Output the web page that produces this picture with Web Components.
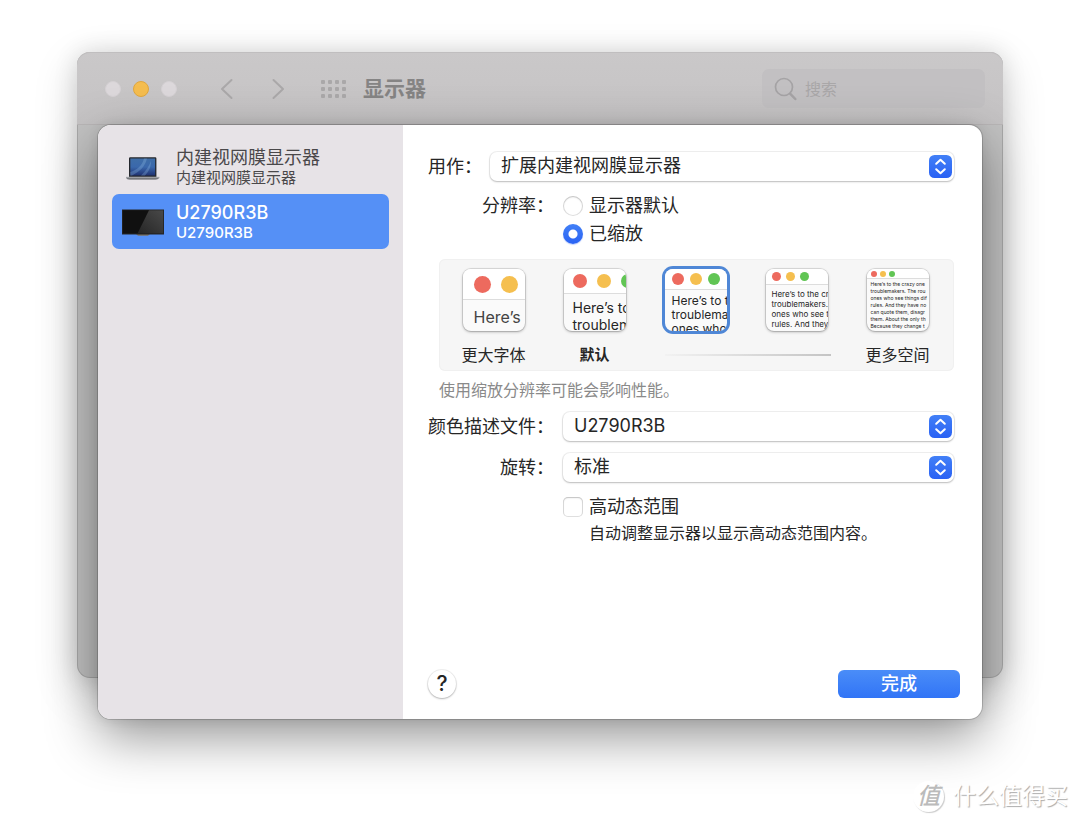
<!DOCTYPE html>
<html lang="zh-CN">
<head>
<meta charset="utf-8">
<meta name="viewport" content="width=device-width, initial-scale=1">
<title>显示器</title>
<style>
  html { background: #fff; }
  body { margin: 0; font: 18px/24px Inter, "Noto Sans CJK SC", sans-serif; color: #262626; }
</style>
</head>
<body>
<prefs-desktop>
  <prefs-window heading="显示器">
    <prefs-sheet>
      <display-item slot="sidebar" name="内建视网膜显示器" detail="内建视网膜显示器" kind="laptop"></display-item>
      <display-item slot="sidebar" name="U2790R3B" detail="U2790R3B" kind="monitor" selected></display-item>

      <popup-field label="用作：" value="扩展内建视网膜显示器" compact></popup-field>
      <resolution-field></resolution-field>
      <scale-picker></scale-picker>
      <popup-field label="颜色描述文件：" value="U2790R3B"></popup-field>
      <popup-field label="旋转：" value="标准"></popup-field>
      <check-field label="高动态范围" hint="自动调整显示器以显示高动态范围内容。"></check-field>

      <help-button slot="footer"></help-button>
      <push-button slot="footer">完成</push-button>
    </prefs-sheet>
  </prefs-window>
  <site-mark slot="mark"></site-mark>
</prefs-desktop>

<script>
class Base extends HTMLElement {
  connectedCallback() {
    if (this.shadowRoot) return;
    this.attachShadow({ mode: 'open' }).innerHTML =
      '<style>*{box-sizing:border-box}button,select,input{font:inherit;color:inherit;margin:0}</style>' + this.render();
  }
  attr(name) { return this.getAttribute(name) || ''; }
}

customElements.define('prefs-desktop', class extends Base {
  render() {
    return `<style>
      :host { display: block; position: relative; box-sizing: border-box; min-height: 100vh; padding: 52px 77px 102px; overflow: hidden; }
      ::slotted([slot=mark]) { position: absolute; right: 12px; bottom: 10px; }
    </style><slot></slot><slot name="mark"></slot>`;
  }
});

customElements.define('prefs-window', class extends Base {
  render() {
    return `<style>
      :host { display: flow-root; border-radius: 13px; background: #c2c2c2;
        box-shadow: inset 0 0 0 1px rgba(0,0,0,.13), 0 0 24px rgba(0,0,0,.12), 0 14px 44px rgba(0,0,0,.18); }
      main { padding: 0 21px; margin-bottom: -41px; }
    </style>
    <window-toolbar heading="${this.attr('heading')}"></window-toolbar>
    <main><slot></slot></main>`;
  }
});

customElements.define('window-toolbar', class extends Base {
  render() {
    const dots = [0, 7, 14].map(y => [0, 7, 14, 21].map(x =>
      `<rect x="${x}" y="${y}" width="4" height="4" rx="1"/>`).join('')).join('');
    return `<style>
      :host { display: flex; align-items: center; height: 73px; box-sizing: border-box; padding: 1px 18px 0 28px;
        border-radius: 13px 13px 0 0; border-bottom: 1px solid #b9b6b7;
        background: linear-gradient(#cac8c9, #c5c3c4); color: #858484;
        box-shadow: inset 0 1px 0 #c0bebf; }
      .lights { display: flex; gap: 12px; }
      .lights button { width: 16px; height: 16px; padding: 0; border: 1px solid #d5d1d4; border-radius: 50%; background: #dcd8db; }
      .lights .min { background: #f5bd4f; border-color: #e0a73e; }
      nav { display: flex; align-items: center; margin-left: 42px; }
      nav button { display: flex; padding: 0; border: 0; background: none; color: #aaa8a9; }
      svg { display: block; }
      .next { margin-left: 36px; }
      .grid { margin-left: 34px; }
      h1 { margin: 0 auto 0 16px; font-size: 21px; line-height: 28px; font-weight: 700; }
      .search { display: flex; align-items: center; gap: 8px; width: 223px; height: 39px; padding: 0 12px; border-radius: 7px; background: #c2c0c2; color: #a5a3a5; }
      input { flex: 1; min-width: 0; padding: 0; border: 0; outline: 0; background: none; font-size: 16px; line-height: 24px; }
      input::placeholder { color: #a9a7a8; opacity: 1; }
    </style>
    <div class="lights"><button aria-label="关闭"></button><button class="min" aria-label="最小化"></button><button aria-label="缩放"></button></div>
    <nav>
      <button aria-label="后退"><svg width="16" height="22" viewBox="0 0 16 22" fill="none" stroke="currentColor" stroke-width="2" stroke-linecap="round" stroke-linejoin="round"><path d="M12.500 2 3 11l9.500 9"/></svg></button>
      <button class="next" aria-label="前进"><svg width="16" height="22" viewBox="0 0 16 22" fill="none" stroke="currentColor" stroke-width="2" stroke-linecap="round" stroke-linejoin="round"><path d="M2.500 2 12 11l-9.500 9"/></svg></button>
      <button class="grid" aria-label="显示全部"><svg width="26" height="18" viewBox="0 0 26 18" fill="currentColor">${dots}</svg></button>
    </nav>
    <h1>${this.attr('heading')}</h1>
    <label class="search"><svg width="23" height="24" viewBox="0 0 23 24" fill="none" stroke="currentColor" stroke-linecap="round"><circle cx="10" cy="10" r="8.500" stroke-width="1.700"/><path d="M16.300 16.800 21.300 22" stroke-width="2.500"/></svg><input type="text" placeholder="搜索" aria-label="搜索"></label>`;
  }
});

customElements.define('prefs-sheet', class extends Base {
  render() {
    return `<style>
      :host { display: flex; position: relative; box-sizing: border-box; min-height: calc(100vh - 228px); border-radius: 13px; background: #fff;
        box-shadow: 0 0 0 1px rgba(0,0,0,.16), 0 0 12px rgba(0,0,0,.08), 0 18px 52px rgba(0,0,0,.42); }
      aside { flex: 0 0 305px; padding: 14px; border-radius: 13px 0 0 13px; background: #e7e3e7; }
      section { display: flex; flex-direction: column; flex: 1; min-width: 0; padding: 27px 22px 21px 25px; }
      form { display: flex; flex-direction: column; gap: 12px; margin: 0 6px auto 0; }
      footer { display: flex; align-items: center; justify-content: space-between; }
    </style>
    <aside><slot name="sidebar"></slot></aside>
    <section><form><slot></slot></form><footer><slot name="footer"></slot></footer></section>`;
  }
});

const deviceArt = {
  laptop: `<svg width="42" height="30" viewBox="0 0 42 30"><defs><linearGradient id="s" x1="0" y1="0" x2="0" y2="1"><stop offset="0" stop-color="#3f6ea8"/><stop offset=".5" stop-color="#3a68ac"/><stop offset="1" stop-color="#1f3272"/></linearGradient><linearGradient id="b" x1="0" y1="0" x2="0" y2="1"><stop offset="0" stop-color="#b9bbbf"/><stop offset="1" stop-color="#4b4d52"/></linearGradient></defs>
    <path d="M7 6.500a1.200 1.200 0 0 1 1.200-1.200h25a1.200 1.200 0 0 1 1.200 1.200V25H7z" fill="#24272d"/><path d="M8.300 6.500h24.800V23.500H8.300z" fill="url(#s)"/><path d="M8.300 20C15 18 20 14 22 6.500h3C23 15 17 20 10 23.500H8.300zM19 23.500C24 19 27 14 29 9c0 6-2 10-6 14.500z" fill="#92bce6" opacity=".3"/><path d="M4 24.800h33.400v1.200q-2 1.600-4 1.600H8q-3 0-4-1.600z" fill="url(#b)"/></svg>`,
  monitor: `<svg width="42" height="30" viewBox="0 0 42 30"><defs><linearGradient id="g" x1="0" y1="1" x2="1" y2="0"><stop offset="0" stop-color="#252525"/><stop offset="1" stop-color="#494949"/></linearGradient></defs>
    <path d="M14 27h14l-2 1.800h-10z" fill="#7a7060"/><path d="M0 2.500h42V27.500H0z" fill="#262626"/><path d="M.8 3.300h40.400V26.500H.8z" fill="#101010"/><path d="M27 3.300h14.200V26.500H15.500z" fill="url(#g)"/></svg>`
};

customElements.define('display-item', class extends Base {
  render() {
    return `<style>
      :host { display: block; color: #4a484a; }
      :host([selected]) { color: #fff; }
      button { display: flex; align-items: center; gap: 12px; width: 100%; padding: 8px 10px 7px; border: 0; border-radius: 7px; background: none; text-align: left; }
      :host([selected]) button { background: #5590f6; }
      svg { flex: none; }
      b, small { display: block; font-weight: 400; }
      b { font-size: 18px; line-height: 22px; }
      small { font-size: 15px; line-height: 18px; }
      :host([selected]) b, :host([selected]) small { font-weight: 500; }
    </style>
    <button aria-pressed="${this.hasAttribute('selected')}">${deviceArt[this.attr('kind')]}<span><b>${this.attr('name')}</b><small>${this.attr('detail')}</small></span></button>`;
  }
});

customElements.define('popup-field', class extends Base {
  render() {
    return `<style>
      :host { display: grid; grid-template-columns: 126px 1fr; gap: 9px; align-items: center; }
      :host([compact]) { grid-template-columns: 54px 1fr; gap: 8px; }
      label { text-align: right; white-space: nowrap; }
      .box { display: grid; align-items: center; }
      select, svg { grid-area: 1 / 1; }
      select { appearance: none; width: 100%; height: 29px; padding: 0 34px 2px 11px; border: 0; border-radius: 7px; background: #fff; line-height: 26px;
        box-shadow: 0 0 0 1px rgba(0,0,0,.06), 0 1px 2px rgba(0,0,0,.22); }
      svg { justify-self: end; margin-right: 2px; pointer-events: none; }
    </style>
    <label for="f">${this.attr('label')}</label>
    <div class="box"><select id="f"><option>${this.attr('value')}</option></select>
    <svg width="23" height="23" viewBox="0 0 23 23"><defs><linearGradient id="k" x1="0" y1="0" x2="0" y2="1"><stop stop-color="#4280f7"/><stop offset="1" stop-color="#2a62f4"/></linearGradient></defs><rect width="23" height="23" rx="5.500" fill="url(#k)"/><path d="M7.200 8.800 11.500 4.800l4.300 4M7.200 14.200l4.300 4 4.300-4" fill="none" stroke="#fff" stroke-width="2" stroke-linecap="round" stroke-linejoin="round"/></svg></div>`;
  }
});

customElements.define('resolution-field', class extends Base {
  render() {
    return `<style>
      :host { display: block; }
      fieldset { display: grid; grid-template-columns: 126px 1fr; gap: 0 9px; margin: 0; padding: 0; border: 0; line-height: 28px; margin: -1px 0; }
      .name { text-align: right; }
      label { display: flex; align-items: center; gap: 6px; grid-column: 2; }
      input { appearance: none; width: 20px; height: 20px; border-radius: 50%; background: #fff; box-shadow: inset 0 0 0 1px rgba(0,0,0,.12), inset 0 1px 2px rgba(0,0,0,.14); }
      input:checked { background: radial-gradient(circle, #fff 0 4px, transparent 5px), linear-gradient(#4280f7, #2a62f4); box-shadow: 0 1px 1px rgba(42,98,244,.3); }
    </style>
    <fieldset aria-labelledby="n"><span class="name" id="n">分辨率：</span>
      <label><input type="radio" name="r">显示器默认</label>
      <label><input type="radio" name="r" checked>已缩放</label>
    </fieldset>`;
  }
});

customElements.define('scale-thumb', class extends Base {
  render() {
    return `<style>
      :host { display: block; --dot: 17px; --gap: 10px; --bar: 31px; --x: 11px; --size: 16px; --line: 34px; --ink: #444; }
      :host([level="2"]) { --dot: 14px; --gap: 10px; --bar: 25px; --x: 9px; --size: 14px; --line: 17px; --ink: #262626; --pad: 5px; }
      :host([level="3"]) { --dot: 12px; --gap: 6px; --bar: 21px; --x: 7px; --size: 12px; --line: 14px; --ink: #262626; --pad: 4px; }
      :host([level="4"]) { --dot: 9px; --gap: 5px; --bar: 16px; --x: 6px; --size: 8px; --line: 10px; --ink: #262626; --pad: 4px; }
      :host([level="5"]) { --dot: 6px; --gap: 3px; --bar: 10px; --x: 4px; --size: 5px; --line: 7px; --ink: #262626; --pad: 2px; }
      button { display: block; width: 62px; height: 62px; padding: 0; border: 0; border-radius: 8px; overflow: hidden; background: #fafafa; text-align: left;
        box-shadow: 0 0 0 1px rgba(0,0,0,.1), 0 1px 3px rgba(0,0,0,.3); }
      :host([selected]) button { box-shadow: 0 0 0 3px #4f87d6; }
      .bar { display: flex; align-items: center; gap: var(--gap); height: var(--bar); padding-left: var(--x); background: #fff; border-bottom: 1px solid #ddd; }
      i { flex: none; width: var(--dot); height: var(--dot); border-radius: 50%; background: #ed6a5e; }
      i:nth-child(2) { background: #f5bf4f; }
      i:nth-child(3) { background: #61c554; }
      .text { display: block; height: calc(62px - var(--bar)); padding: var(--pad, 0) 0 0 var(--x); overflow: hidden; color: var(--ink); font-size: var(--size); line-height: var(--line); white-space: pre; }
    </style>
    <button type="button" lang="en" aria-pressed="${this.hasAttribute('selected')}"><span class="bar"><i></i><i></i><i></i></span><span class="text">${this.textContent}</span></button>`;
  }
});

customElements.define('scale-picker', class extends Base {
  render() {
    return `<style>
      :host { display: block; margin-left: 11px; }
      .panel { display: grid; grid-template-columns: repeat(5, 1fr); justify-items: center; row-gap: 14px; padding: 10px 6px 6px 4px; border-radius: 6px; background: #f6f6f6; box-shadow: inset 0 0 0 1px #f0f0f0; }
      span, p { font-size: 16px; line-height: 20px; }
      .strong { font-size: 15px; font-weight: 700; }
      hr { grid-column: 3 / 5; justify-self: stretch; align-self: center; height: 2px; margin: 0 16px 0 20px; border: 0; background: linear-gradient(90deg, #f2f2f2, #c4c4c4); }
      p { margin: 9px 0 0; color: #8a8a8a; }
    </style>
    <div class="panel">
      <scale-thumb level="1">Here’s</scale-thumb>
      <scale-thumb level="2">Here’s to
troublem</scale-thumb>
      <scale-thumb level="3" selected>Here’s to t
troublema
ones who</scale-thumb>
      <scale-thumb level="4">Here’s to the cr
troublemakers.
ones who see t
rules. And they</scale-thumb>
      <scale-thumb level="5">Here’s to the crazy one
troublemakers. The rou
ones who see things dif
rules. And they have no
can quote them, disagr
them. About the only th
Because they change t</scale-thumb>
      <span>更大字体</span><span class="strong">默认</span><hr><span>更多空间</span>
    </div>
    <p>使用缩放分辨率可能会影响性能。</p>`;
  }
});

customElements.define('check-field', class extends Base {
  render() {
    return `<style>
      :host { display: block; padding-left: 135px; }
      label { display: flex; align-items: center; gap: 6px; line-height: 26px; }
      input { appearance: none; flex: none; width: 20px; height: 20px; border-radius: 5px; background: #fff; box-shadow: inset 0 0 0 1px rgba(0,0,0,.12), inset 0 1px 2px rgba(0,0,0,.14); }
      p { margin: 3px 0 0 26px; font-size: 16px; line-height: 20px; }
    </style>
    <label><input type="checkbox" aria-describedby="h">${this.attr('label')}</label><p id="h">${this.attr('hint')}</p>`;
  }
});

customElements.define('help-button', class extends Base {
  render() {
    return `<style>
      :host { display: block; }
      button { display: block; width: 28px; height: 28px; padding: 0; border: 0; border-radius: 50%; background: #fff; font-size: 21px; line-height: 28px; font-weight: 500;
        box-shadow: 0 0 0 1px rgba(0,0,0,.06), 0 1px 2px rgba(0,0,0,.25); }
    </style><button aria-label="帮助">?</button>`;
  }
});

customElements.define('push-button', class extends Base {
  render() {
    return `<style>
      :host { display: block; }
      button { display: block; min-width: 122px; height: 28px; padding: 0 16px; border: 0; border-radius: 6px; color: #fff; font-weight: 500; line-height: 28px;
        background: linear-gradient(#4a8df8, #3174f6); }
    </style><button><slot></slot></button>`;
  }
});

customElements.define('site-mark', class extends Base {
  render() {
    return `<style>
      :host { display: flex; align-items: center; gap: 9px; color: #fff; font-size: 23px; line-height: 32px; text-shadow: 1px 1px 1px #aaa; }
      b { width: 31px; height: 31px; border-radius: 50%; background: #fff; box-shadow: 1px 1px 1px #ccc; color: #bbb; font-size: 23px; line-height: 30px; font-style: italic; font-weight: 500; text-align: center; text-shadow: none; }
    </style><b>值</b><span>什么值得买</span>`;
  }
});
</script>
</body>
</html>
